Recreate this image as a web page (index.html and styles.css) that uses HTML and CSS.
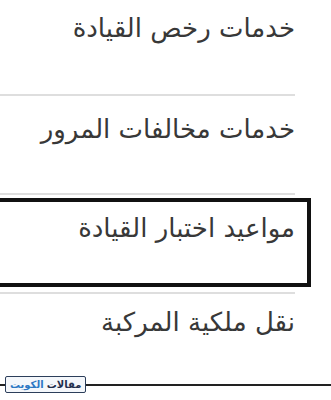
FILE: index.html
```html
<!DOCTYPE html>
<html lang="ar" dir="rtl">
<head>
<meta charset="utf-8">
<link rel="stylesheet" href="styles.css">
</head>
<body>
<ul class="menu">
  <li class="item item-first"><span class="label">خدمات رخص القيادة</span></li>
  <li class="item"><span class="label">خدمات مخالفات المرور</span></li>
  <li class="item item-marked"><span class="label">مواعيد اختبار القيادة</span></li>
  <li class="item item-last"><span class="label">نقل ملكية المركبة</span></li>
</ul>
<div class="footer">
  <span class="rule rule-short"></span>
  <span class="brand"><span class="brand-a">مقالات</span> <span class="brand-b">الكويت</span></span>
  <span class="rule rule-long"></span>
</div>
</body>
</html>
```
FILE: styles.css
```css
html, body {
  margin: 0;
  padding: 0;
  background: #ffffff;
  width: 331px;
  height: 400px;
  overflow: hidden;
}
body {
  font-family: "DejaVu Sans", "Noto Sans", sans-serif;
  color: #383838;
}
.menu {
  list-style: none;
  margin: 0;
  padding: 0;
}
.item {
  box-sizing: border-box;
  height: 99px;
  margin-right: 36px;
  margin-left: 0;
  padding-top: 18px;
  border-bottom: 2px solid #dedede;
  position: relative;
}
.item-first {
  height: 96px;
  padding-top: 13px;
}
.item-last {
  height: 82px;
  border-bottom: none;
  padding-top: 13px;
}
.label {
  display: block;
  font-size: 26px;
  line-height: 30px;
  text-align: right;
}
.item-marked::after {
  content: "";
  position: absolute;
  top: 3px;
  left: -10px;
  right: -16px;
  height: 81px;
  border: 4px solid #111111;
}
.footer {
  direction: ltr;
  display: flex;
  align-items: center;
  height: 17px;
}
.rule {
  height: 2px;
  background: #222222;
}
.rule-short {
  width: 5px;
}
.rule-long {
  flex: 1;
}
.brand {
  direction: rtl;
  box-sizing: border-box;
  height: 17px;
  padding: 0 4px;
  border: 1px solid #2c3e5a;
  border-radius: 2px;
  font-size: 10px;
  line-height: 15px;
  text-align: center;
  background: #f4f7fb;
  white-space: nowrap;
}
.brand-a {
  color: #1f2f4d;
  font-weight: bold;
}
.brand-b {
  color: #2e78c4;
  font-weight: bold;
}
```
